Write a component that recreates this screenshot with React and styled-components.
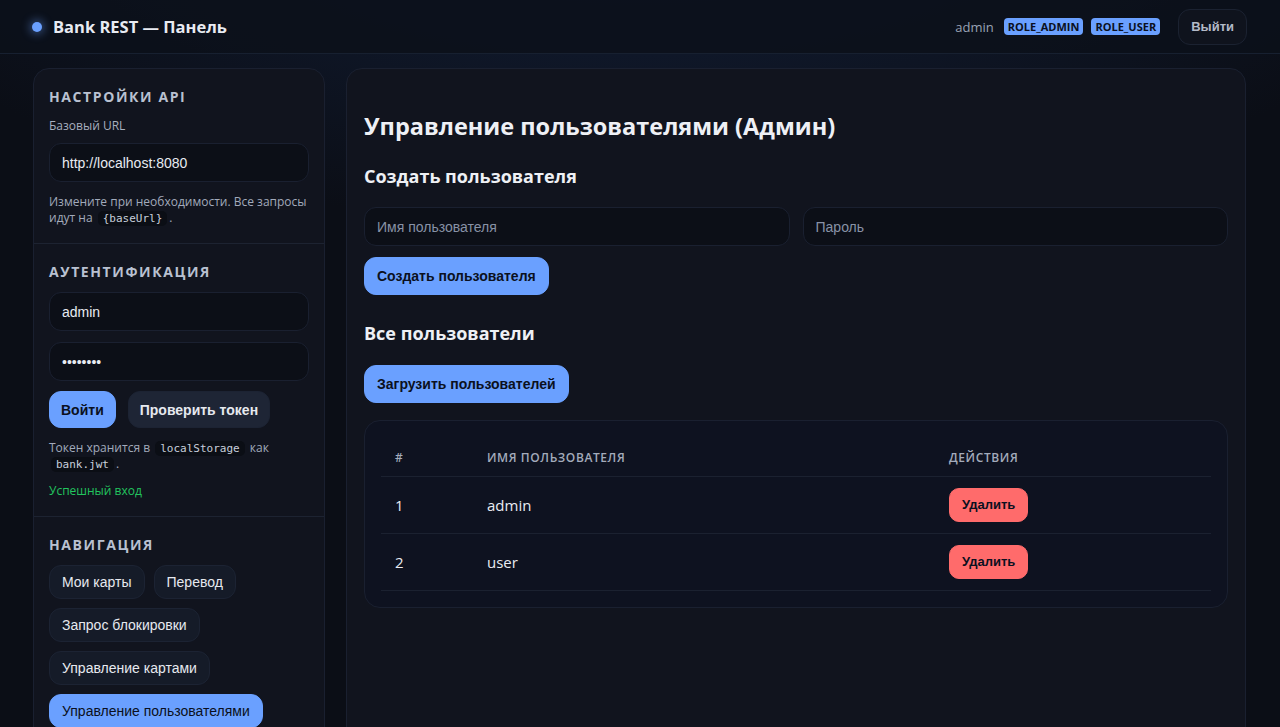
import React from "react";
import styled, { createGlobalStyle } from "styled-components";

const Global = createGlobalStyle`
  * { box-sizing: border-box; }
  html, body { margin: 0; padding: 0; }
  body {
    background: radial-gradient(1200px 500px at 50% -120px, #13203a 0%, rgba(11,14,22,0) 70%), #0b0e16;
    color: #e6e9ef;
    font-family: "Open Sans", "Noto Sans", sans-serif;
    min-height: 727px;
    overflow: hidden;
  }
`;

const Header = styled.header`
  height: 54px;
  display: flex;
  align-items: center;
  justify-content: space-between;
  padding: 0 33px 0 32px;
  border-bottom: 1px solid #172030;
  background: rgba(12, 16, 26, 0.85);
`;

const Brand = styled.div`
  display: flex;
  align-items: center;
  gap: 11px;
  font-weight: 700;
  font-size: 16.5px;
  color: #e8ebf2;
`;

const Dot = styled.span`
  width: 10px;
  height: 10px;
  border-radius: 50%;
  background: #6aa0ff;
  box-shadow: 0 0 10px 2px rgba(106, 160, 255, 0.45);
`;

const UserBox = styled.div`
  display: flex;
  align-items: center;
  gap: 8px;
`;

const UserName = styled.span`
  font-size: 13px;
  color: #9aa3b5;
  margin-right: 2px;
`;

const Badge = styled.span`
  background: #6aa0ff;
  color: #0b1020;
  font-size: 11px;
  font-weight: 700;
  padding: 1px 4px;
  height: 17px;
  line-height: 15px;
  border-radius: 4px;
`;

const GhostButton = styled.button`
  margin-left: 10px;
  height: 36px;
  padding: 0 12px;
  background: #0f131d;
  border: 1px solid #1b2231;
  border-radius: 12px;
  color: #b3bac8;
  font-family: "Liberation Sans", Arial, sans-serif;
  font-weight: 700;
  font-size: 13px;
`;

const Layout = styled.div`
  display: grid;
  grid-template-columns: 292px 900px;
  gap: 21px;
  padding: 14px 0 0 33px;
  align-items: start;
`;

const Sidebar = styled.aside`
  background: #11141e;
  border: 1px solid #1a2030;
  border-radius: 16px;
  height: 700px;
  overflow: hidden;
`;

const Section = styled.section`
  padding: 16px 15px 17px;
  border-bottom: ${(p) => (p.$last ? "none" : "1px solid #1d2331")};
  display: flex;
  flex-direction: column;
`;

const SideTitle = styled.h3`
  margin: 2px 0 10px;
  font-size: 14px;
  line-height: 20px;
  font-weight: 700;
  letter-spacing: 1.6px;
  text-transform: uppercase;
  color: #b9c1d1;
`;

const Label = styled.div`
  font-size: 12px;
  color: #a7afbf;
  margin-bottom: 9px;
`;

const Input = styled.input`
  width: 100%;
  height: 39px;
  padding: 0 12px;
  background: #0c0f17;
  border: 1px solid #1a2030;
  border-radius: 12px;
  color: #e8ebf2;
  font-family: "Liberation Sans", Arial, sans-serif;
  font-size: 14px;
  outline: none;
  &::placeholder { color: #8892a6; }
`;

const Stack = styled.div`
  display: flex;
  flex-direction: column;
  gap: 11px;
`;

const Help = styled.p`
  margin: 12px 0 0;
  font-size: 12px;
  line-height: 16px;
  color: #a2aabb;
`;

const Code = styled.code`
  font-family: "DejaVu Sans Mono", "Liberation Mono", monospace;
  font-size: 11px;
  line-height: 13px;
  display: inline-block;
  background: #0b0e15;
  color: #c8cfdc;
  padding: 1px 5px;
  border-radius: 5px;
  margin: 0 2px;
`;

const Row = styled.div`
  display: flex;
  flex-wrap: wrap;
  gap: ${(p) => p.$gap || 12}px;
  margin-top: ${(p) => p.$mt || 0}px;
`;

const Button = styled.button`
  height: ${(p) => p.$h || 38}px;
  padding: 0 ${(p) => p.$px || 12}px;
  border-radius: ${(p) => p.$r || 12}px;
  border: 1px solid ${(p) => (p.$variant === "primary" ? "#6aa0ff" : p.$variant === "danger" ? "#ff6b6b" : "#1c2333")};
  background: ${(p) =>
    p.$variant === "primary" ? "#6aa0ff" : p.$variant === "danger" ? "#ff6b6b" : p.$variant === "nav" ? "#151b28" : "#1e2535"};
  color: ${(p) => (p.$variant === "primary" || p.$variant === "danger" ? "#0b1020" : "#e6e9ef")};
  font-family: "Liberation Sans", Arial, sans-serif;
  font-size: ${(p) => p.$fs || 14}px;
  font-weight: ${(p) => (p.$regular ? 400 : 700)};
  cursor: pointer;
  white-space: nowrap;
`;

const Success = styled.div`
  margin-top: 10px;
  font-size: 12px;
  color: #22c55e;
`;

const Main = styled.main`
  background: #11141e;
  border: 1px solid #1a2030;
  border-radius: 16px;
  height: 700px;
  padding: 40px 17px 0;
`;

const H2 = styled.h2`
  margin: 0 0 20px;
  font-size: 23.5px;
  line-height: 34px;
  font-weight: 700;
  color: #eef0f5;
`;

const H3 = styled.h3`
  margin: ${(p) => p.$mt || 0}px 0 ${(p) => p.$mb || 18}px;
  font-size: 18px;
  line-height: 26px;
  font-weight: 700;
  color: #eef0f5;
`;

const FormGrid = styled.div`
  display: grid;
  grid-template-columns: 1fr 1fr;
  gap: 13px;
  margin-bottom: 11px;
`;

const TableCard = styled.div`
  margin-top: 17px;
  background: #0e1220;
  border: 1px solid #1a2030;
  border-radius: 16px;
  padding: 18px 16px 16px;
`;

const Table = styled.table`
  width: 100%;
  border-collapse: collapse;
  font-family: "Open Sans", "Noto Sans", sans-serif;
`;

const Th = styled.th`
  text-align: left;
  font-size: 12px;
  font-weight: 600;
  letter-spacing: 0.6px;
  color: #a3abbb;
  height: 37px;
  padding: 0 14px;
  border-bottom: 1px solid #1b2130;
  width: ${(p) => p.$w || "auto"};
`;

const Td = styled.td`
  font-size: 15px;
  color: #e8ebf2;
  height: 57px;
  padding: 0 14px;
  border-bottom: 1px solid #1b2130;
`;

const navItems = ["Мои карты", "Перевод", "Запрос блокировки", "Управление картами", "Управление пользователями"];

export default function App() {
  return (
    <>
      <Global />
      <Header>
        <Brand>
          <Dot />
          Bank REST — Панель
        </Brand>
        <UserBox>
          <UserName>admin</UserName>
          <Badge>ROLE_ADMIN</Badge>
          <Badge>ROLE_USER</Badge>
          <GhostButton>Выйти</GhostButton>
        </UserBox>
      </Header>
      <Layout>
        <Sidebar>
          <Section>
            <SideTitle>Настройки API</SideTitle>
            <Label>Базовый URL</Label>
            <Input defaultValue="http://localhost:8080" />
            <Help>
              Измените при необходимости. Все запросы идут на <Code>{"{baseUrl}"}</Code>.
            </Help>
          </Section>
          <Section>
            <SideTitle>Аутентификация</SideTitle>
            <Stack>
              <Input defaultValue="admin" />
              <Input type="password" defaultValue="password" />
            </Stack>
            <Row $mt={10} $gap={12}>
              <Button $variant="primary" $h={37} $px={11}>Войти</Button>
              <Button $variant="secondary" $h={37} $px={11}>Проверить токен</Button>
            </Row>
            <Help>
              Токен хранится в <Code>localStorage</Code> как <Code>bank.jwt</Code>.
            </Help>
            <Success>Успешный вход</Success>
          </Section>
          <Section $last>
            <SideTitle>Навигация</SideTitle>
            <Row $gap={9}>
              {navItems.map((n, i) => (
                <Button key={n} $variant={i === 4 ? "primary" : "nav"} $h={34} $regular>
                  {n}
                </Button>
              ))}
            </Row>
          </Section>
        </Sidebar>
        <Main>
          <H2>Управление пользователями (Админ)</H2>
          <H3>Создать пользователя</H3>
          <FormGrid>
            <Input placeholder="Имя пользователя" />
            <Input placeholder="Пароль" type="password" />
          </FormGrid>
          <Button $variant="primary">Создать пользователя</Button>
          <H3 $mt={25} $mb={19}>Все пользователи</H3>
          <Button $variant="primary">Загрузить пользователей</Button>
          <TableCard>
            <Table>
              <thead>
                <tr>
                  <Th $w="92px">#</Th>
                  <Th $w="462px">ИМЯ ПОЛЬЗОВАТЕЛЯ</Th>
                  <Th>ДЕЙСТВИЯ</Th>
                </tr>
              </thead>
              <tbody>
                {["admin", "user"].map((u, i) => (
                  <tr key={u}>
                    <Td>{i + 1}</Td>
                    <Td>{u}</Td>
                    <Td>
                      <Button $variant="danger" $h={34} $r={10} $fs={13}>Удалить</Button>
                    </Td>
                  </tr>
                ))}
              </tbody>
            </Table>
          </TableCard>
        </Main>
      </Layout>
    </>
  );
}
